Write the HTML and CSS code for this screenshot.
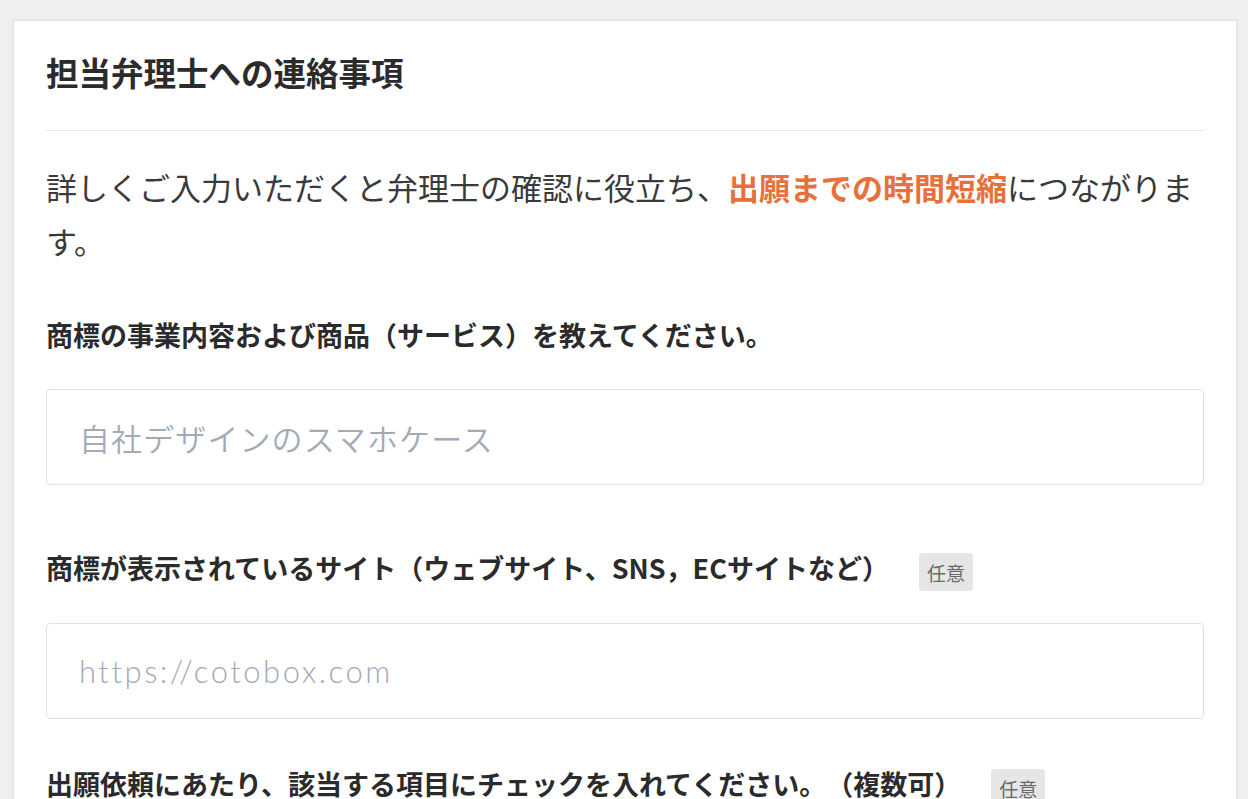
FILE: index.html
```html
<!DOCTYPE html>
<html lang="ja">
<head>
<meta charset="utf-8">
<title>担当弁理士への連絡事項</title>
<link rel="stylesheet" href="styles.css">
</head>
<body>
<main class="page">
  <section class="card">
    <header class="card-header">
      <h1 class="card-title">担当弁理士への連絡事項</h1>
    </header>
    <p class="intro">詳しくご入力いただくと弁理士の確認に役立ち、<strong class="accent">出願までの時間短縮</strong>につながります。</p>

    <div class="field field-first">
      <label class="field-label">商標の事業内容および商品（サービス）を教えてください。</label>
      <input class="field-input" type="text" placeholder="自社デザインのスマホケース">
    </div>

    <div class="field field-second">
      <div class="label-row">
        <label class="field-label">商標が表示されているサイト（ウェブサイト、SNS，ECサイトなど）</label>
        <span class="badge">任意</span>
      </div>
      <input class="field-input field-input-latin" type="text" placeholder="https://cotobox.com">
    </div>

    <div class="field field-third">
      <div class="label-row">
        <label class="field-label">出願依頼にあたり、該当する項目にチェックを入れてください。（複数可）</label>
        <span class="badge">任意</span>
      </div>
    </div>
  </section>
</main>
</body>
</html>
```

FILE: styles.css
```css
* { box-sizing: border-box; }
html, body {
  margin: 0;
  padding: 0;
  height: 100%;
  overflow: hidden;
  background: #f0f0f0;
}
body {
  font-family: "Noto Sans CJK JP", "Noto Sans", sans-serif;
  color: #333333;
  text-spacing-trim: space-all;
}
.page {
  padding: 20px 11px 0 13px;
}
.card {
  background: #ffffff;
  border: 1px solid #e3e3e3;
  box-shadow: 0 0 4px rgba(0, 0, 0, 0.05);
  padding: 0 32px 60px;
  min-height: 900px;
}
.card-header {
  padding-top: 27px;
  padding-bottom: 34px;
  border-bottom: 1px solid #e6e6e6;
}
.card-title {
  margin: 0;
  font-size: 32.5px;
  line-height: 48px;
  font-weight: 700;
  color: #2b2b2b;
}
.intro {
  margin: 29px 0 0;
  font-size: 31px;
  line-height: 54px;
  color: #3a3a3a;
}
.accent {
  color: #e8703a;
  font-weight: 700;
}
.field-first { margin-top: 47px; }
.field-second { margin-top: 63px; }
.field-third { margin-top: 45px; }
.label-row {
  display: flex;
  align-items: flex-start;
  height: 40px;
}
.field-label {
  display: block;
  font-size: 27px;
  line-height: 40px;
  font-weight: 700;
  color: #2b2b2b;
}
.badge {
  flex: none;
  margin-left: 30px;
  margin-top: 5px;
  height: 38px;
  padding: 0 8px;
  display: inline-flex;
  align-items: center;
  background: #e6e6e6;
  border-radius: 4px;
  font-size: 19px;
  color: #6a6a6a;
}
.field-input {
  display: block;
  width: 100%;
  height: 96px;
  margin-top: 35px;
  padding: 0 32px;
  border: 1px solid #e2e2e2;
  border-radius: 4px;
  background: #ffffff;
  font-family: "Noto Sans CJK JP", sans-serif;
  font-weight: 350;
  font-size: 31px;
  color: #333333;
  outline: none;
}
.field-first .field-input {
  margin-top: 34px;
}
.field-input-latin {
  font-family: "Lato", "Noto Sans CJK JP", sans-serif;
  font-weight: 300;
}
.field-input::placeholder {
  color: #a2aab7;
  letter-spacing: 1.1px;
}
.field-input-latin::placeholder {
  letter-spacing: 2.5px;
}
```
